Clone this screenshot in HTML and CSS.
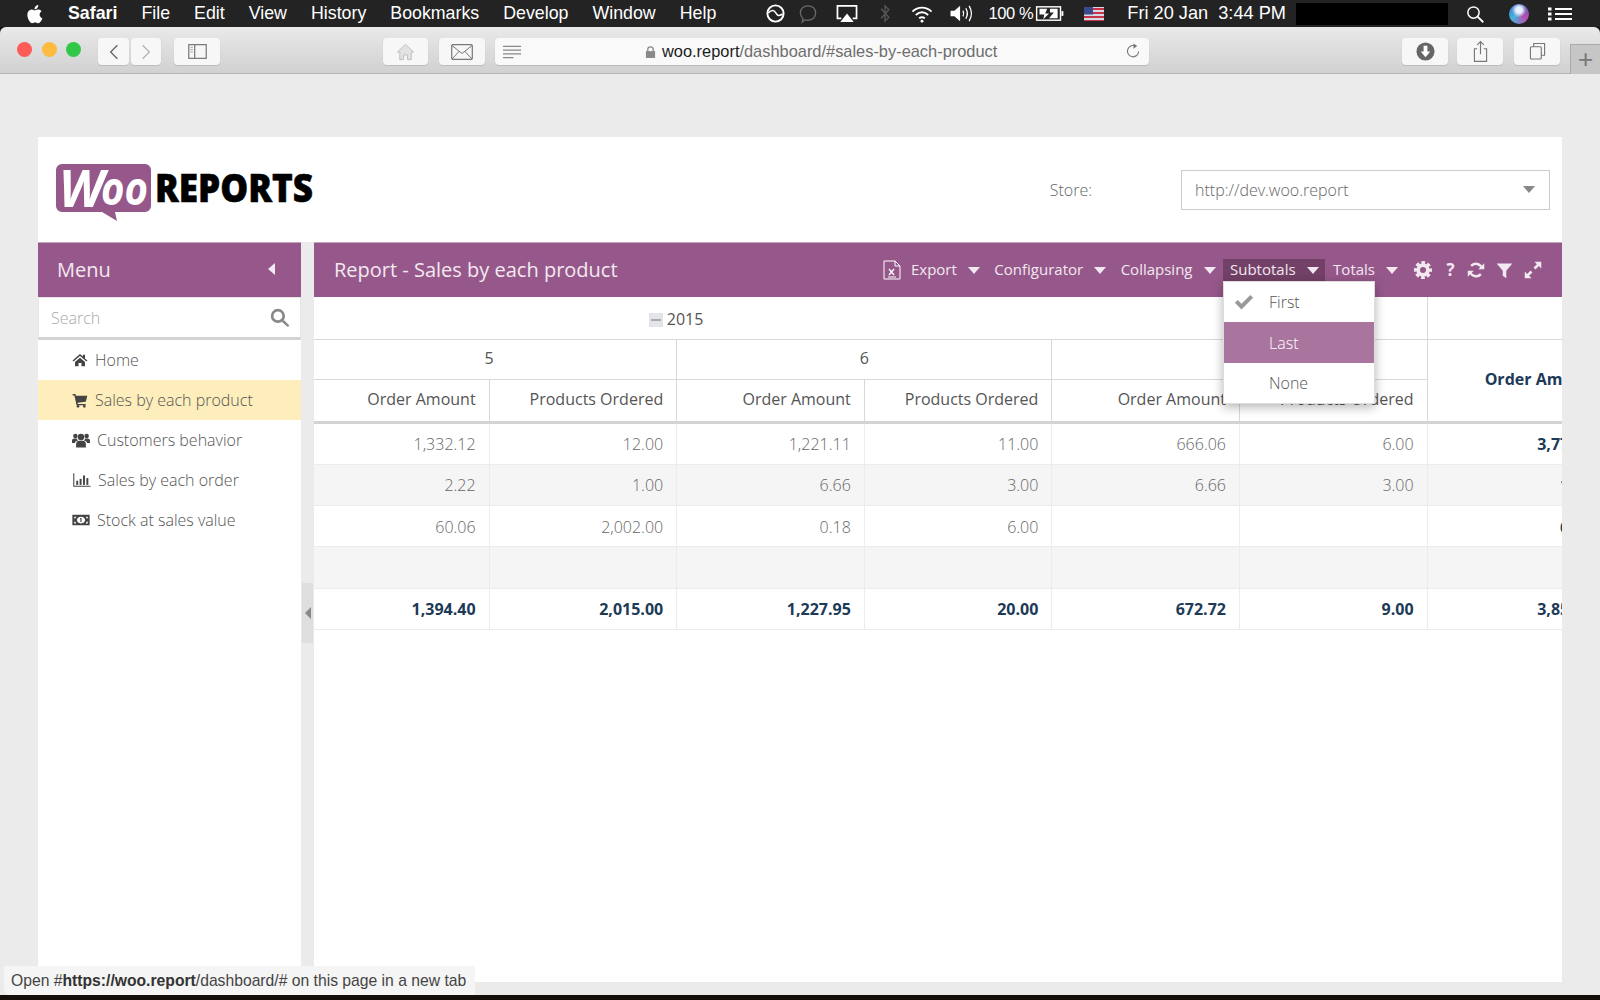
FILE: index.html
```html
<!DOCTYPE html>
<html lang="en">
<head>
<meta charset="UTF-8">
<title>Woo Reports - Sales by each product</title>
<link rel="stylesheet" href="styles.css">
</head>
<body>

<!-- shared icons -->
<svg class="defs" width="0" height="0">
  <symbol id="i-home" viewBox="0 0 24 24"><path d="M12 3 .8 12.6l1.4 1.6L12 6l9.800 8.200 1.400-1.600L19.500 9.600V4h-3.200v2.800z"/><path d="M4.500 15 12 8.600l7.500 6.400v6.500h-5.300v-5H9.800v5H4.500z"/></symbol>
  <symbol id="i-cart" viewBox="0 0 24 24"><path d="M1 3h4.200l.6 2.500H23l-2.300 9.300-12.300 1.400.4 1.800H20.500V20H6.800L3.600 5.200H1z"/><circle cx="9" cy="21.500" r="2"/><circle cx="18.500" cy="21.500" r="2"/></symbol>
  <symbol id="i-users" viewBox="0 0 24 24"><circle cx="12" cy="8" r="4.300"/><path d="M5.500 22v-4.500c0-3 2-4.500 4-4.500h5c2 0 4 1.500 4 4.500V22z"/><circle cx="4.500" cy="6.500" r="3"/><circle cx="19.500" cy="6.500" r="3"/><path d="M0 16v-3c0-2 1.500-3 3-3h3.500c.3 1.300.8 2.200 1.500 2.800-2.500.6-4 2.300-4.200 3.200zM24 16v-3c0-2-1.500-3-3-3h-3.500c-.3 1.300-.8 2.200-1.500 2.800 2.500.6 4 2.300 4.200 3.200z"/></symbol>
  <symbol id="i-chart" viewBox="0 0 24 24"><path d="M1 3h1.400v16.600H24V21H1z"/><rect x="5" y="13" width="2.600" height="5.500"/><rect x="9.500" y="10.500" width="2.600" height="8"/><rect x="14" y="6" width="2.600" height="12.500"/><rect x="18.500" y="9.500" width="2.600" height="9"/></symbol>
  <symbol id="i-money" viewBox="0 0 24 24"><path fill-rule="evenodd" d="M.5 5h23v14H.5zM12 7.500c-3 0-5.500 2-5.500 4.500s2.500 4.500 5.500 4.500 5.500-2 5.500-4.500-2.500-4.500-5.500-4.500zM3 7.500v2.500c1.300 0 2.500-1 2.500-2.500zM18.500 7.500c0 1.500 1.200 2.500 2.500 2.500V7.500zM3 14v2.500h2.500C5.500 15 4.300 14 3 14zM21 14c-1.300 0-2.500 1-2.500 2.500H21z"/><path d="M11 9.200h1.700v5.600h-1.500v-4l-.8.500z"/></symbol>
  <symbol id="i-search" viewBox="0 0 24 24"><circle cx="10" cy="10" r="7.300" fill="none" stroke="currentColor" stroke-width="3.400"/><path d="M15 17.500l2.500-2.500 6 6c.7.700.7 1.500 0 2.200s-1.500.7-2.200 0z"/></symbol>
  <symbol id="i-gear" viewBox="0 0 24 24"><circle cx="12" cy="12" r="6.500" fill="none" stroke="currentColor" stroke-width="5"/><circle cx="12" cy="12" r="10" fill="none" stroke="currentColor" stroke-width="4" stroke-dasharray="4.800 3.050" stroke-dashoffset="2.400"/></symbol>
  <symbol id="i-sync" viewBox="0 0 24 24"><path d="M20 10A8.500 8.500 0 0 0 5.500 6.500" fill="none" stroke="currentColor" stroke-width="3.200"/><path d="M23 3v8h-8z"/><path d="M4 14a8.500 8.500 0 0 0 14.500 3.500" fill="none" stroke="currentColor" stroke-width="3.200"/><path d="M1 21v-8h8z"/></symbol>
  <symbol id="i-filter" viewBox="0 0 24 24"><path d="M1 2h22l-8.500 10.500V23l-5-3.500v-7z"/></symbol>
  <symbol id="i-expand" viewBox="0 0 24 24"><path d="M14 1h9v9l-3.200-3.200-4.500 4.500-2.600-2.600 4.500-4.500zM10 23H1v-9l3.200 3.200 4.500-4.500 2.600 2.600-4.500 4.500z"/></symbol>
  <symbol id="i-check" viewBox="0 0 24 24"><path d="M1 13l3.500-3.500 4.500 4.500L19.500 3.500 23 7 9 21z"/></symbol>
</svg>

<div class="menubar">
  <div class="apple"><svg viewBox="0 0 24 24" width="20" height="22"><path fill="#fff" d="M17.500 12.700c0-2.700 2.200-4 2.300-4.100-1.300-1.800-3.200-2.100-3.900-2.100-1.700-.2-3.200 1-4.100 1s-2.200-1-3.600-1C6.400 6.500 4.700 7.600 3.800 9.200c-2 3.400-.5 8.400 1.400 11.100.9 1.300 2 2.800 3.500 2.700 1.400-.1 1.900-.9 3.600-.9s2.200.9 3.600.9c1.500 0 2.500-1.300 3.400-2.700 1.100-1.500 1.500-3 1.500-3.100-.1 0-3.300-1.300-3.300-4.500zM14.800 4.700c.8-.9 1.300-2.200 1.100-3.500-1.100 0-2.500.7-3.300 1.700-.7.800-1.300 2.100-1.200 3.400 1.300.1 2.600-.6 3.400-1.600z"/></svg></div>
  <span class="menu-app">Safari</span>
  <span>File</span>
  <span>Edit</span>
  <span>View</span>
  <span>History</span>
  <span>Bookmarks</span>
  <span>Develop</span>
  <span>Window</span>
  <span>Help</span>

  <div class="status">
    <svg viewBox="0 0 22 22" width="21" height="21"><circle cx="11" cy="11" r="8.500" fill="none" stroke="#fff" stroke-width="2"/><path d="M3.500 10.500c3-3.500 6-3.500 8 0s3.500 3 7 1" fill="none" stroke="#fff" stroke-width="1.600"/></svg>
    <svg viewBox="0 0 22 22" width="22" height="21"><path d="M11 3c4.500 0 8 3 8 7.500S15.500 18 11 18c-1 0-2 0-3-.4L5 20l.6-4C3.800 14.500 3 12.500 3 10.500 3 6 6.500 3 11 3z" fill="none" stroke="#666" stroke-width="1.500"/></svg>
    <svg class="st-air" viewBox="0 0 24 22" width="24" height="21"><path d="M6 16H2V3h20v13h-4" fill="none" stroke="#fff" stroke-width="1.800"/><path d="M12 11l7 9H5z" fill="#fff"/></svg>
    <svg class="st-bt" viewBox="0 0 12 22" width="12" height="21"><path d="M2 6l8 9-4 4V3l4 4-8 9" fill="none" stroke="#555" stroke-width="1.500"/></svg>
    <svg class="st-wifi" viewBox="0 0 34 22" width="34" height="21"><path d="M7 9c6-5.500 14-5.500 20 0M10.500 12.500c4-3.500 9-3.500 13 0M14 16c2-1.500 4-1.500 6 0" fill="none" stroke="#fff" stroke-width="2"/><circle cx="17" cy="19" r="1.500" fill="#fff"/></svg>
    <svg class="st-vol" viewBox="0 0 26 22" width="26" height="21"><path d="M1 8h4l6-5v16l-6-5H1z" fill="#fff"/><path d="M14 8c1 2 1 4 0 6M17 5.500c2 3.500 2 7.500 0 11M20.500 3c3 5 3 11 0 16" fill="none" stroke="#fff" stroke-width="1.400"/></svg>
    <span class="status-pct">100 %</span>
    <svg viewBox="0 0 30 22" width="30" height="21"><rect x="1" y="4" width="25" height="14" fill="none" stroke="#fff" stroke-width="1.500"/><rect x="27" y="8.500" width="2" height="5" fill="#fff"/><path d="M4 6h8l-2 5h4l-6 6 1-5H4zM15 6h8v10h-9l5-6h-4z" fill="#fff"/></svg>
    <svg class="flag" viewBox="0 0 20 14" width="20" height="14"><rect width="20" height="14" fill="#d9d9e4"/><path d="M0 1h20v2H0zM0 5h20v2H0zM0 9h20v2H0zM0 13h20v1H0z" fill="#c8344a"/><rect width="9" height="7.500" fill="#3a4a8c"/></svg>
    <span class="status-date">Fri 20 Jan&nbsp; 3:44 PM</span>
    <div class="blackout"></div>
    <svg class="st-search" viewBox="0 0 24 24" width="18" height="20"><circle cx="10" cy="10" r="7.500" fill="none" stroke="#fff" stroke-width="2"/><path d="M15.500 15.500 23 23" stroke="#fff" stroke-width="2.400"/></svg>
    <div class="siri"></div>
    <svg viewBox="0 0 24 20" width="24" height="20"><path d="M7 4h17v2H7zM7 9h17v2H7zM7 14h17v2H7z" fill="#fff"/><path d="M0 3.500h3.500v3H0zM0 8.500h3.500v3H0zM0 13.500h3.500v3H0z" fill="#fff"/></svg>
  </div>
</div>

<div class="toolbar">
  <span class="lights"><i class="red"></i><i class="amber"></i><i class="green"></i></span>
  <div class="tb-btn tb-back"><svg viewBox="0 0 12 20" width="10" height="18"><path d="M10 2 2 10l8 8" fill="none" stroke="#666" stroke-width="1.600"/></svg></div>
  <div class="tb-btn tb-fwd"><svg viewBox="0 0 12 20" width="10" height="18"><path d="M2 2l8 8-8 8" fill="none" stroke="#b5b5b5" stroke-width="1.600"/></svg></div>
  <div class="tb-btn tb-side"><svg viewBox="0 0 20 16" width="19" height="15"><rect x=".7" y=".7" width="18.600" height="14.600" fill="none" stroke="#777" stroke-width="1.300"/><path d="M7 1v14" stroke="#777" stroke-width="1.300"/><path d="M2.500 3.500h2.500M2.500 6h2.500M2.500 8.500h2.500" stroke="#999" stroke-width="1"/></svg></div>
  <div class="tb-btn tb-home"><svg viewBox="0 0 20 20" width="19" height="20"><path d="M10 2 1.500 10H4v8h4v-5h4v5h4v-8h2.500z" fill="#e2e2e2" stroke="#bdbdbd" stroke-width="1"/></svg></div>
  <div class="tb-btn tb-mail"><svg viewBox="0 0 22 16" width="22" height="16"><rect x=".7" y=".7" width="20.600" height="14.600" rx="1" fill="none" stroke="#777" stroke-width="1.200"/><path d="M1 1.500l10 8 10-8M1 15l7.500-8M21 15l-7.500-8" fill="none" stroke="#777" stroke-width="1"/></svg></div>
  <div class="url">
    <svg viewBox="0 0 20 14" width="19" height="14"><path d="M0 1h19M0 5h19M0 9h19M0 13h11" stroke="#888" stroke-width="1.300"/></svg>
    <div class="url-text">
      <svg viewBox="0 0 12 14" width="11" height="14"><path d="M3 6V4.500a3 3 0 0 1 6 0V6" fill="none" stroke="#888" stroke-width="1.400"/><rect x="1" y="6" width="10" height="7.500" fill="#888"/></svg>
      <span><b>woo.report</b>/dashboard/#sales-by-each-product</span>
    </div>
    <svg class="url-reload" viewBox="0 0 16 18" width="15" height="17"><path d="M13.500 9a6 6 0 1 1-4-6" fill="none" stroke="#777" stroke-width="1.200"/><path d="M8 .5l4 2.500-4 3z" fill="#777"/></svg>
  </div>
  <div class="tb-btn tb-down"><svg viewBox="0 0 20 20" width="19" height="19"><circle cx="10" cy="10" r="9.500" fill="#666"/><path d="M8 4h4v6h3l-5 6-5-6h3z" fill="#fff"/></svg></div>
  <div class="tb-btn tb-share"><svg viewBox="0 0 16 24" width="15" height="23"><path d="M4.500 9H1.500v13.500h13V9h-3M8 15V2M4.500 5 8 1.500 11.500 5" fill="none" stroke="#777" stroke-width="1.200"/></svg></div>
  <div class="tb-btn tb-tabs"><svg viewBox="0 0 18 20" width="17" height="19"><path d="M5 5V1.500h11.500V14H13" fill="none" stroke="#777" stroke-width="1.200"/><rect x="1.500" y="5" width="11.500" height="13" rx="1" fill="none" stroke="#777" stroke-width="1.200"/></svg></div>
  <div class="tb-plus">+</div>
</div>

<div class="page">
  <div class="app">
    <header class="top">
      <svg class="logo" viewBox="0 0 270 60" width="270" height="60">
        <path d="M9 2h83a6 6 0 0 1 6 6v36a6 6 0 0 1-6 6H62l2 9-15-9H9a6 6 0 0 1-6-6V8a6 6 0 0 1 6-6z" fill="#96588a"/>
        <text class="logo-w" x="6" y="45" textLength="45" lengthAdjust="spacingAndGlyphs">W</text>
        <text class="logo-oo" x="48" y="43" textLength="47" lengthAdjust="spacingAndGlyphs">oo</text>
        <text class="logo-rep" x="102" y="40" textLength="158" lengthAdjust="spacingAndGlyphs">REPORTS</text>
      </svg>
      <label class="store-label">Store:</label>
      <div class="store-select"><span>http://dev.woo.report</span><i class="caret caret-grey"></i></div>
    </header>

    <div class="body">
      <aside class="sidebar">
        <div class="side-head"><span>Menu</span><i class="caret-left"></i></div>
        <div class="search"><span>Search</span><svg width="19" height="19"><use href="#i-search"/></svg></div>
        <nav class="nav">
          <a><svg class="nav-i" width="16" height="16"><use href="#i-home"/></svg><span>Home</span></a>
          <a class="active"><svg class="nav-i" width="16" height="16"><use href="#i-cart"/></svg><span>Sales by each product</span></a>
          <a><svg class="nav-i" width="18" height="18"><use href="#i-users"/></svg><span>Customers behavior</span></a>
          <a><svg class="nav-i" width="19" height="18"><use href="#i-chart"/></svg><span>Sales by each order</span></a>
          <a><svg class="nav-i" width="18" height="18"><use href="#i-money"/></svg><span>Stock at sales value</span></a>
        </nav>
      </aside>

      <div class="gutter"><div class="handle"><i></i></div></div>

      <main class="main">
        <div class="report-head">
          <h1>Report - Sales by each product</h1>
          <div class="tools">
            <svg class="xls" viewBox="0 0 18 20" width="18" height="20"><path d="M1 1h11l5 5v13H1z" fill="none" stroke="#fff" stroke-width="1"/><path d="M12 1v5h5" fill="none" stroke="#fff" stroke-width="1"/><path d="M6 9l5 6M11 9l-5 6" stroke="#fff" stroke-width="1.300"/><path d="M5 17h8" stroke="#fff" stroke-width="1"/></svg>
            <div class="tool">Export<i class="caret"></i></div>
            <div class="tool">Configurator<i class="caret"></i></div>
            <div class="tool">Collapsing<i class="caret"></i></div>
            <div class="tool open">Subtotals<i class="caret"></i></div>
            <div class="tool">Totals<i class="caret"></i></div>
          </div>
          <div class="tool-icons">
            <svg class="ti-gear" width="18" height="18"><use href="#i-gear"/></svg>
            <span class="ti-help">?</span>
            <svg width="18" height="18"><use href="#i-sync"/></svg>
            <svg width="17" height="17"><use href="#i-filter"/></svg>
            <svg width="18" height="18"><use href="#i-expand"/></svg>
          </div>
        </div>

        <div class="dropdown">
          <div class="dd-item"><svg width="20" height="20"><use href="#i-check"/></svg><span>First</span></div>
          <div class="dd-item hover"><span>Last</span></div>
          <div class="dd-item"><span>None</span></div>
        </div>

        <div class="grid-wrap">
          <table class="grid">
            <colgroup><col><col><col><col><col><col><col></colgroup>
            <thead>
              <tr class="r-year">
                <th colspan="6" class="year"><span class="minus"></span>2015</th>
                <th></th>
              </tr>
              <tr class="r-month">
                <th colspan="2">5</th>
                <th colspan="2">6</th>
                <th colspan="2">7</th>
                <th rowspan="2" class="total-head">Order Amount</th>
              </tr>
              <tr class="r-col">
                <th>Order Amount</th><th>Products Ordered</th>
                <th>Order Amount</th><th>Products Ordered</th>
                <th>Order Amount</th><th>Products Ordered</th>
              </tr>
            </thead>
            <tbody>
              <tr><td>1,332.12</td><td>12.00</td><td>1,221.11</td><td>11.00</td><td>666.06</td><td>6.00</td><td class="sum">3,779.29</td></tr>
              <tr class="alt"><td>2.22</td><td>1.00</td><td>6.66</td><td>3.00</td><td>6.66</td><td>3.00</td><td class="sum">15.54</td></tr>
              <tr class="low"><td>60.06</td><td>2,002.00</td><td>0.18</td><td>6.00</td><td></td><td></td><td class="sum">60.24</td></tr>
              <tr class="alt tall"><td></td><td></td><td></td><td></td><td></td><td></td><td></td></tr>
              <tr class="sum-row"><td>1,394.40</td><td>2,015.00</td><td>1,227.95</td><td>20.00</td><td>672.72</td><td>9.00</td><td>3,855.07</td></tr>
            </tbody>
          </table>
        </div>
      </main>
    </div>
  </div>
</div>

<div class="desktop"></div>

<div class="link-status">Open #<b>https://woo.report</b>/dashboard/# on this page in a new tab</div>

</body>
</html>
```

FILE: styles.css
```css
html,body{margin:0;padding:0;height:1000px;overflow:hidden}
body{font-family:"Open Sans",sans-serif;background:#150e0b;display:flex;flex-direction:column;position:relative}
svg{fill:currentColor;display:block;flex:none}
.defs{position:absolute}

/* mac menu bar */
.menubar{height:27px;background:#232323;color:#fff;font:17.800px "Liberation Sans",Arial,sans-serif;display:flex;align-items:center;gap:24px;padding-left:25px;flex:none}
.apple{width:19px}
.menu-app{font-weight:bold}
.status{margin-left:auto;display:flex;align-items:center;gap:11px;padding-right:28px}
.st-air{margin-left:5px}
.st-bt{margin-left:9px}
.st-wifi{margin-left:3px}
.st-vol{margin-left:-1px}
.status-pct{margin-left:2px;margin-right:-9px;font-size:16.500px;letter-spacing:-.4px}
.status .flag{margin-left:8px}
.status-date{margin-left:12px;white-space:nowrap;font-size:18.200px}
.blackout{width:152px;height:22px;background:#000;align-self:flex-start;margin-left:-1px}
.st-search{margin-left:7px}
.siri{width:20px;height:20px;border-radius:50%;background:radial-gradient(circle at 50% 30%,#e8f0fa 0 18%,transparent 42%),conic-gradient(#3f63c8,#b84fb0,#45b5dc,#3f63c8);margin:0 8px 0 14px}

/* safari toolbar */
.toolbar{height:47px;box-sizing:border-box;flex:none;background:linear-gradient(#e9e9e9,#d1d1d1);border-bottom:1px solid #b3b3b3;border-radius:6px 6px 0 0;display:flex;align-items:flex-start;position:relative;padding-left:17px}
.lights{display:flex;gap:9.500px;margin-top:15px;flex:none}
.lights i{width:15px;height:15px;border-radius:50%;display:block}
.red{background:#fc5b57}
.amber{background:#fdbb3f}
.green{background:#33c748}
.tb-btn{height:27px;margin-top:11px;background:#f7f7f7;border-radius:4px;box-shadow:0 1px 1px #bbb;display:flex;align-items:center;justify-content:center;flex:none}
.tb-back{width:31px;margin-left:17px}
.tb-fwd{width:30px;margin-left:2px}
.tb-side{width:46px;margin-left:13px}
.tb-home{width:45px;margin-left:163px}
.tb-mail{width:46px;margin-left:11px}
.tb-down{width:46px;margin-left:253px}
.tb-share{width:46px;margin-left:9px}
.tb-tabs{width:46px;margin-left:11px}
.tb-plus{width:30px;height:30px;flex:none;margin:17px 0 0 10px;background:#c6c6c6;border-left:1px solid #aaa;border-top:1px solid #aaa;color:#777;font:300 26px/29px "Liberation Sans",sans-serif;text-align:center;box-sizing:border-box}
.url{width:654px;flex:none;height:27px;margin:11px 0 0 10px;background:#f9f9f9;border-radius:4px;box-shadow:0 1px 1px #bbb;display:flex;align-items:center;padding:0 8px;box-sizing:border-box;font:16.400px "Liberation Sans",Arial,sans-serif;color:#6d6d6d}
.url-text{margin-left:123px;display:flex;align-items:center;gap:6px;white-space:nowrap}
.url-text b{font-weight:normal;color:#1c1c1c}
.url-reload{margin-left:auto}

/* page */
.page{height:921px;flex:none;background:#ebebeb;padding:63px 38px 13px;box-sizing:border-box}
.app{height:100%;display:flex;flex-direction:column}
.top{height:105px;flex:none;background:#fff;display:flex;align-items:center;padding:0 12px 0 15px;font-size:16px;font-weight:300;color:#666}
.logo{margin-top:5px}
.logo text{font-family:"Open Sans",sans-serif}
.logo-w{font-size:52px;font-weight:700;font-style:italic;fill:#fff}
.logo-oo{font-size:46px;font-weight:700;font-style:italic;fill:#fff}
.logo-rep{font-size:39px;font-weight:800;fill:#000;stroke:#000;stroke-width:.6px}
.store-label{margin-left:auto}
.store-select{width:369px;height:40px;margin-left:89px;border:1px solid #ccc;box-sizing:border-box;display:flex;align-items:center;padding:0 14px 0 13px;justify-content:space-between}
.caret{width:0;height:0;border:6.500px solid transparent;border-top:7px solid #f2e8f0;border-bottom:0;display:block}
.caret-grey{border-top-color:#888}

.body{flex:1;display:flex;min-height:0;background:#ebebeb}
.sidebar{width:263px;flex:none;background:#fff}
.side-head{height:55px;background:#96588a;border-top:1px solid #c5a3bf;box-sizing:border-box;color:#f3e9f1;font-size:20px;display:flex;align-items:center;justify-content:space-between;padding:0 26px 2px 19px}
.caret-left{width:0;height:0;border:6px solid transparent;border-right:7px solid #f3e9f1;border-left:0;display:block}
.search{height:43px;box-sizing:border-box;border:1px solid #e6e6e6;border-bottom:3px solid #d3d3d3;display:flex;align-items:center;justify-content:space-between;padding:0 11px 0 12px;font-size:16px;font-weight:300;color:#aaa}
.search svg{color:#888}
.nav{display:flex;flex-direction:column}
.nav a{height:40px;display:flex;align-items:center;padding-left:34px;font-size:16px;font-weight:300;color:#555}
.nav a span{margin-left:7px}
.nav a.active{background:#fdeebb}
.nav-i{color:#444}

.gutter{width:13px;flex:none}
.handle{width:11px;height:60px;margin:341px 0 0 1px;background:#dedede;display:flex;align-items:center;justify-content:center}
.handle i{width:0;height:0;border:6px solid transparent;border-right:6px solid #888;border-left:0;display:block}

.main{flex:1;min-width:0;background:#fff;position:relative}
.report-head{height:55px;background:#96588a;border-top:1px solid #c5a3bf;box-sizing:border-box;color:#f3e9f1;display:flex;align-items:center;padding:0 20px}
.report-head h1{margin:0 0 2px;font-size:20px;font-weight:400}
.tools{margin-left:auto;display:flex;align-items:center;font-size:15px}
.xls{margin-right:1px}
.tool{height:23px;box-sizing:border-box;display:flex;align-items:center;padding:0 6px 2px 7px;margin-left:1.500px;color:#f2e8f0}
.tool .caret{margin-left:11px;margin-top:2px}
.tool.open{background:#734067}
.tool-icons{display:flex;align-items:center;gap:11px;margin-left:10px;color:#f2e8f0}
.ti-gear{margin-right:2px}
.ti-help{font-size:17px;font-weight:700;width:11px;text-align:center;line-height:18px}

/* subtotals menu, hangs off the toolbar */
.dropdown{position:absolute;left:909px;top:39px;width:150px;background:#fff;border:1px solid #ddd;box-shadow:0 3px 10px rgba(0,0,0,.3);z-index:5;color:#555;font-size:16px;font-weight:300}
.dd-item{height:40px;display:flex;align-items:center;padding-left:45px;position:relative;box-sizing:border-box}
.dd-item svg{position:absolute;left:10px;top:10px;color:#999}
.dd-item.hover{background:#a9759f;color:#fff;height:41px}

.grid-wrap{overflow:hidden}
.grid{border-collapse:collapse;table-layout:fixed;width:1313px;margin-left:-13px;font-size:16px}
.grid col{width:187.600px}
.grid th{font-weight:400;color:#555;border:1px solid #d8d8d8;border-top:0;padding:0 13px;text-align:right}
.r-year th{height:40px;text-align:center;padding-top:2px}
.r-year .year{padding-right:389px;border-left:0}
.r-month th{height:35px;text-align:center;padding-bottom:4px}
.r-col th{height:37px;padding-bottom:4px;border-bottom:3px solid #d3d3d3}
.grid .total-head{font-weight:700;color:#1d3a57;text-align:left;padding-left:57px;padding-bottom:4px;border-bottom:3px solid #d3d3d3}
.minus{display:inline-block;width:14px;height:14px;background:linear-gradient(#a9adb3,#a9adb3) center/10px 2px no-repeat,#e3e5e8;margin-right:4px;vertical-align:-2px}
.grid td{height:40px;padding:0 13px;border:1px solid #ececec;border-top:0;text-align:right;color:#666;font-weight:300;box-sizing:content-box}
.grid tr.low td{padding-top:1px;height:39px}
.grid tr.alt td{background:#f5f5f5}
.grid tr.tall td{height:41px}
.grid td.sum,.grid .sum-row td{color:#1d3a57;font-weight:700}

.desktop{flex:1;background:#150e0b}
.link-status{position:absolute;left:4px;top:966px;width:471px;height:29px;box-sizing:border-box;background:#f5f5f5;border-radius:0 0 0 6px;font:15.700px/29px "Liberation Sans",Arial,sans-serif;color:#444;padding-left:7px;white-space:nowrap}
.link-status b{font-weight:bold;color:#333}
```
